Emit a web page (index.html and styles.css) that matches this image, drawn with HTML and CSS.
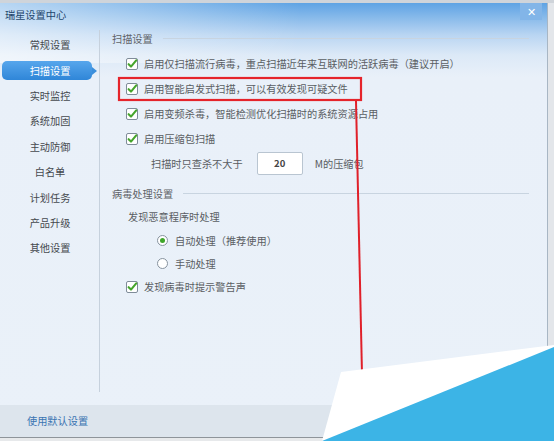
FILE: index.html
```html
<!DOCTYPE html>
<html lang="zh-CN">
<head>
  <meta charset="UTF-8">
  <title>瑞星设置中心</title>
  <link rel="stylesheet" href="styles.css">
</head>
<body>

  <!-- edge of the window behind -->
  <div class="topstrip"></div>

  <div class="window">
    <div class="titlebar">
      <span class="title">瑞星设置中心</span>
      <span class="close">✕</span>
    </div>

    <div class="main">
      <!-- left menu -->
      <ul class="nav">
        <li><span>常规设置</span></li>
        <li class="active"><span>扫描设置</span></li>
        <li><span>实时监控</span></li>
        <li><span>系统加固</span></li>
        <li><span>主动防御</span></li>
        <li><span>白名单</span></li>
        <li><span>计划任务</span></li>
        <li><span>产品升级</span></li>
        <li><span>其他设置</span></li>
      </ul>

      <!-- settings -->
      <div class="content">
        <div class="sec-head"><span>扫描设置</span></div>

        <div class="opt first">
          <svg class="chk" viewBox="0 0 12 12"><rect x="0.5" y="0.5" width="11" height="11" rx="1.5"/><path d="M2.6 6.2 L5 8.6 L10.2 2.4"/></svg>
          <span>启用仅扫描流行病毒，重点扫描近年来互联网的活跃病毒（建议开启）</span>
        </div>
        <div class="opt">
          <svg class="chk" viewBox="0 0 12 12"><rect x="0.5" y="0.5" width="11" height="11" rx="1.5"/><path d="M2.6 6.2 L5 8.6 L10.2 2.4"/></svg>
          <span>启用智能启发式扫描，可以有效发现可疑文件</span>
        </div>
        <div class="opt">
          <svg class="chk" viewBox="0 0 12 12"><rect x="0.5" y="0.5" width="11" height="11" rx="1.5"/><path d="M2.6 6.2 L5 8.6 L10.2 2.4"/></svg>
          <span>启用变频杀毒，智能检测优化扫描时的系统资源占用</span>
        </div>
        <div class="opt">
          <svg class="chk" viewBox="0 0 12 12"><rect x="0.5" y="0.5" width="11" height="11" rx="1.5"/><path d="M2.6 6.2 L5 8.6 L10.2 2.4"/></svg>
          <span>启用压缩包扫描</span>
        </div>
        <div class="sizerow">
          <span>扫描时只查杀不大于</span>
          <span class="num">20</span>
          <span class="unit">M的压缩包</span>
        </div>

        <div class="sec-head second"><span>病毒处理设置</span></div>

        <div class="sub">发现恶意程序时处理</div>
        <div class="radio-row">
          <span class="radio on"></span>
          <span>自动处理（推荐使用）</span>
        </div>
        <div class="radio-row">
          <span class="radio"></span>
          <span>手动处理</span>
        </div>
        <div class="opt small">
          <svg class="chk" viewBox="0 0 12 12"><rect x="0.5" y="0.5" width="11" height="11" rx="1.5"/><path d="M2.6 6.2 L5 8.6 L10.2 2.4"/></svg>
          <span>发现病毒时提示警告声</span>
        </div>
      </div>
    </div>

    <div class="footer">
      <a href="#">使用默认设置</a>
    </div>
  </div>

  <div class="below"></div>

  <!-- annotation drawn over the screenshot -->
  <svg class="overlay" width="554" height="441" viewBox="0 0 554 441">
    <rect x="119" y="78" width="242" height="22" fill="none" stroke="#e5242b" stroke-width="2.2"/>
    <line x1="356" y1="101" x2="362" y2="374" stroke="#e0202a" stroke-width="2"/>
    <polygon points="341,372 554,345 554,441 322,441" fill="#ffffff"/>
    <polygon points="322,441 554,347 554,441" fill="#3cb4e6"/>
  </svg>

</body>
</html>
```

FILE: styles.css
```css
* {
  margin: 0;
  padding: 0;
  box-sizing: border-box;
}

body {
  font-family: "Noto Sans CJK SC", "Noto Sans", sans-serif;
  font-size: 10.2px;
  color: #5a5e63;
  background: #e3e6ea;
  width: 554px;
  height: 441px;
  overflow: hidden;
  position: relative;
}

.topstrip {
  height: 3px;
  background: #cfd4da;
}

/* Window */
.window {
  width: 548px;
  border-right: 1px solid #a8b6c4;
  background:
    linear-gradient(to right, rgba(255, 255, 255, 0.55), rgba(255, 255, 255, 0) 55%) top left / 100% 60px no-repeat,
    linear-gradient(to bottom, #5ea3e4 0px, #86b9ea 14px, #b9d5f2 32px, #dce9f7 52px, #e9f0f9 74px, #eaf1f9 100%);
}

.titlebar {
  height: 27px;
  display: flex;
  justify-content: space-between;
  align-items: flex-start;
}

.title {
  padding: 5px 0 0 5px;
  line-height: 14px;
  color: #23466c;
}

.close {
  width: 22px;
  height: 17px;
  margin-right: 5px;
  background: #82b5e8;
  color: #fff;
  font-size: 11px;
  line-height: 17px;
  text-align: center;
}

.main {
  height: 362px;
  margin-bottom: 13px;
  display: flex;
}

/* Left menu */
.nav {
  list-style: none;
  width: 100px;
  padding-top: 2px;
  border-right: 1px solid #c6d1dd;
}

.nav li {
  height: 25.4px;
  display: flex;
  align-items: center;
}

.nav li span {
  position: relative;
  flex: 1;
  height: 19px;
  line-height: 19px;
  margin: 0 7px 0 2px;
  padding-left: 6px;
  text-align: center;
  color: #45494e;
  border-radius: 5px;
}

.nav li.active span {
  background: linear-gradient(to bottom, #57a6ec, #2f86d8);
  color: #fff;
}

.nav li.active span::after {
  content: '';
  position: absolute;
  right: -5px;
  top: 6px;
  border-left: 5px solid #3b8fdc;
  border-top: 4px solid transparent;
  border-bottom: 4px solid transparent;
}

/* Settings */
.content {
  flex: 1;
  padding: 0 18px 0 12px;
}

.sec-head {
  height: 16px;
  display: flex;
  align-items: center;
  color: #5f6368;
}

.sec-head::after {
  content: '';
  flex: 1;
  height: 1px;
  margin-left: 10px;
  background: #c8d4e0;
}

.sec-head.second {
  margin-top: 9px;
}

.opt {
  height: 25px;
  display: flex;
  align-items: center;
  padding-left: 14px;
}

.opt.first {
  margin-top: 5px;
}

.opt.small {
  height: 23px;
}

.chk {
  width: 12px;
  height: 12px;
  margin-right: 6px;
  overflow: visible;
}

.chk rect {
  fill: #fff;
  stroke: #7f8c99;
}

.chk path {
  fill: none;
  stroke: #45a52c;
  stroke-width: 2.1;
  stroke-linecap: round;
  stroke-linejoin: round;
}

.sizerow {
  height: 25px;
  display: flex;
  align-items: center;
  padding-left: 39px;
}

.num {
  width: 46px;
  height: 23px;
  margin-left: 14px;
  line-height: 21px;
  text-align: center;
  font-weight: bold;
  font-size: 9.5px;
  color: #444;
  background: #fff;
  border: 1px solid #b9c5d1;
  border-radius: 2px;
}

.unit {
  margin-left: 12px;
}

.sub {
  height: 24px;
  line-height: 24px;
  margin-top: 4px;
  padding-left: 16px;
}

.radio-row {
  height: 23px;
  display: flex;
  align-items: center;
  padding-left: 45px;
}

.radio {
  width: 11px;
  height: 11px;
  margin-right: 7px;
  border: 1px solid #87939f;
  border-radius: 50%;
  background: #fff;
  display: flex;
  align-items: center;
  justify-content: center;
}

.radio.on::after {
  content: '';
  width: 5px;
  height: 5px;
  border-radius: 50%;
  background: #3fa62a;
}

/* Footer */
.footer {
  height: 32px;
  background: #dde5ed;
  padding-left: 27px;
  line-height: 32px;
}

.footer a {
  color: #3a74b2;
  text-decoration: none;
}

.below {
  height: 4px;
  border-top: 1px solid #8e949a;
  background: #e7e9eb;
}

.overlay {
  position: absolute;
  top: 0;
  left: 0;
  pointer-events: none;
}
```
